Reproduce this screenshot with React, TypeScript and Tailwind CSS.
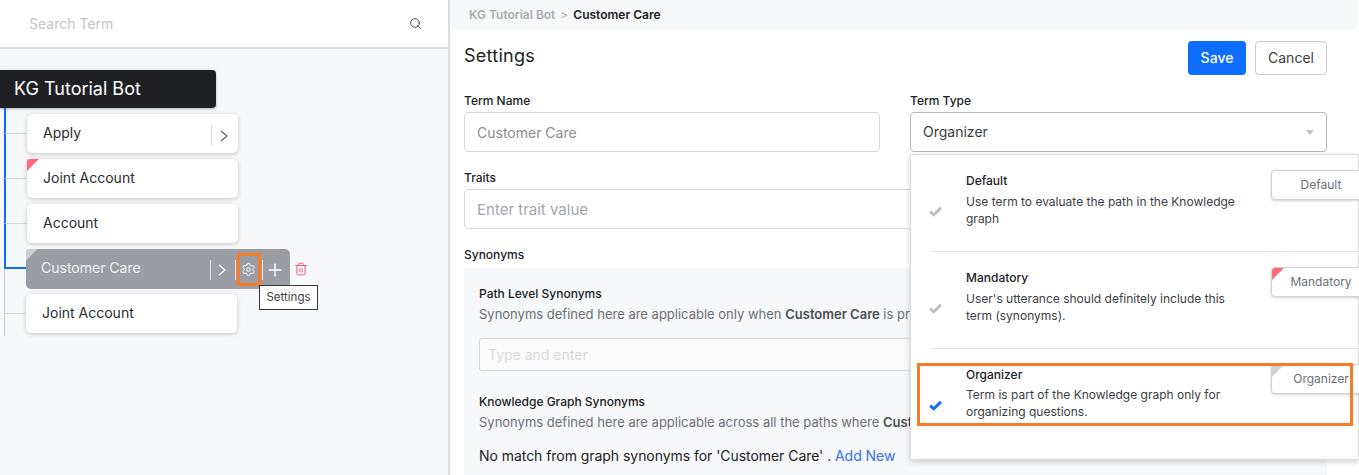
import { Plus, Search, Settings, Trash2 } from 'lucide-react';

const Corner = ({ color }: { color: 'red' | 'gray' }) => (
  <span
    className={`absolute left-0 top-0 h-3 w-3 rounded-tl-[3px] [clip-path:polygon(0_0,100%_0,0_100%)] ${
      color === 'red' ? 'bg-[#ff6b7d]' : 'bg-[#cfd1d5]'
    }`}
  />
);

const Check = ({ active }: { active?: boolean }) => (
  <svg viewBox="0 0 14 11" className={`h-[11px] w-[13px] ${active ? 'text-[#0d6efd]' : 'text-[#bdbfc4]'}`} fill="none" stroke="currentColor" strokeWidth={3.2}>
    <path d="M1.2 5.6l3.9 3.4L12.8 1.6" />
  </svg>
);

const Chevron = ({ className }: { className: string }) => (
  <svg viewBox="0 0 8 12" className={`h-3 w-2 ${className}`} fill="none" stroke="currentColor" strokeWidth={1.2}>
    <path d="M1 1l6 5-6 5" />
  </svg>
);

// connector: top half meets the stub, bottom half carries the trunk on
const Row = ({ blueTop, blueBottom, blueStub, children }: { blueTop?: boolean; blueBottom?: boolean; blueStub?: boolean; children: React.ReactNode }) => (
  <div className="relative flex h-[45px] items-center">
    <div className="ml-1 flex h-full w-[23px] shrink-0 flex-col">
      <div
        className={`h-[23px] ${blueTop ? 'border-l-2 border-l-[#0d6efd]' : 'border-l border-l-[#c9cbd0]'} ${
          blueStub ? 'border-b-2 border-b-[#0d6efd]' : 'border-b border-b-[#d3d5d9]'
        }`}
      />
      <div className={`flex-1 ${blueBottom ? 'border-l-2 border-l-[#0d6efd]' : 'border-l border-l-[#c9cbd0]'}`} />
    </div>
    {children}
  </div>
);

const Card = ({ label, corner, chevron, shift }: { label: string; corner?: boolean; chevron?: boolean; shift?: boolean }) => (
  <div className={`relative flex h-[39px] w-[211px] items-center rounded-[5px] bg-white pl-4 text-sm text-[#2a2c30] shadow-[0_1px_4px_rgba(0,0,0,0.22)] ${shift ? '-ml-px' : ''}`}>
    {corner && <Corner color="red" />}
    <span className="flex-1 -mt-px">{label}</span>
    {chevron && (
      <span className="mt-[3px] flex h-5 w-[27px] items-center justify-center border-l border-[#d5d7db] pr-[3px]">
        <Chevron className="mt-px text-[#5f6368]" />
      </span>
    )}
  </div>
);

const Option = ({ title, lines, badge, corner, active, height, tight }: { title: string; lines: string[]; badge: string; corner?: 'red' | 'gray'; active?: boolean; height: string; tight?: boolean }) => (
  <div className={`flex ${height}`}>
    <div className="w-[55px] shrink-0 pl-[18px] pt-[33px]">
      <Check active={active} />
    </div>
    <div className="w-[305px] shrink-0">
      <div className="text-xs font-medium leading-4 text-[#202124]">{title}</div>
      <div className={`${tight ? 'mt-[3px]' : 'mt-[4px]'} text-xs leading-[17px] text-[#3c4043]`}>
        {lines.map((l) => (
          <div key={l}>{l}</div>
        ))}
      </div>
    </div>
    <div className="relative -mt-[3px] flex h-[30px] w-[100px] shrink-0 items-center justify-center rounded-[4px] border border-[#d0d2d6] bg-white text-xs text-[#6b6f76] shadow-[0_1px_3px_rgba(0,0,0,0.18)]">
      {corner && <Corner color={corner} />}
      <span>{badge}</span>
    </div>
  </div>
);

export default function App() {
  return (
    <div className="flex h-[475px] w-[1359px] overflow-hidden bg-white [font-family:Inter,sans-serif]">
      {/* Left tree */}
      <aside className="flex w-[450px] shrink-0 flex-col border-r-2 border-[#dcdde0] bg-[#f7f8fa]">
        <div className="flex h-[49px] shrink-0 items-center justify-between border-b-2 border-[#dcdde0] bg-white pl-[29px] pr-[26px]">
          <span className="text-sm text-[#c3c5ca]">Search Term</span>
          <Search className="h-[13px] w-[13px] text-[#3c4043]" strokeWidth={1.6} />
        </div>
        <div className="mt-[21px] flex h-[38px] w-[216px] items-center rounded-r-[4px] bg-[#1f2024] pl-[14px] text-lg text-white shadow-[0_1px_3px_rgba(0,0,0,0.3)]">
          KG Tutorial Bot
        </div>
        <div className="ml-1 h-[3px] border-l-2 border-[#0d6efd]" />
        <Row blueTop blueBottom>
          <Card label="Apply" chevron />
        </Row>
        <Row blueTop blueBottom>
          <Card label="Joint Account" corner />
        </Row>
        <Row blueTop blueBottom>
          <Card label="Account" />
        </Row>
        <Row blueTop blueStub>
          <div className="relative -ml-px flex h-10 w-[264px] items-center rounded-[5px] bg-[#9a9ea4] pl-[15px] text-sm text-white">
            <Corner color="gray" />
            <span className="flex-1 -mt-px text-[#f1f2f3]">Customer Care</span>
            <span className="mt-[2px] flex h-5 w-[25px] items-center justify-center border-l border-[#e4e5e7] pr-[2px]">
              <Chevron className="text-white" />
            </span>
            <span className="mt-[2px] flex h-5 w-[27px] items-center justify-center border-l border-[#e4e5e7]">
              <span className="flex h-[33px] w-6 shrink-0 items-center justify-center border-[3px] border-[#f97b25]">
                <Settings className="h-[15px] w-[15px] -translate-x-px text-white" strokeWidth={1.5} />
              </span>
            </span>
            <span className="mt-[2px] flex h-5 w-[28px] items-center justify-center border-l border-[#e4e5e7] pr-1">
              <Plus className="h-5 w-5 text-white" strokeWidth={1.7} />
            </span>
          </div>
          <Trash2 className="ml-1 h-[14px] w-[14px] text-[#f2557a]" strokeWidth={1.7} />
          <div className="absolute left-[259px] top-[39px] flex h-[25px] w-[59px] items-center justify-center border border-[#35373b] bg-white pt-px text-[11.5px] text-[#3c4043]">
            Settings
          </div>
        </Row>
        <Row>
          <Card label="Joint Account" shift />
        </Row>
      </aside>

      {/* Right settings */}
      <main className="min-w-0 flex-1">
        <div className="flex h-[30px] w-[907px] items-center gap-[5px] bg-[#f7f8fa] pl-[19px] text-xs font-semibold">
          <span className="text-[#a8abb0]">KG Tutorial Bot</span>
          <span className="font-normal text-[#a8abb0]">&gt;</span>
          <span className="text-[#202124]">Customer Care</span>
        </div>
        <div className="w-[877px] pl-[14px]">
          <div className="mt-[11px] flex h-[34px] items-start justify-between">
            <h1 className="-mt-[2px] text-lg leading-[34px] tracking-[0.25px] text-[#202124]">Settings</h1>
            <div className="flex gap-[9px]">
              <button className="h-[34px] w-[58px] rounded-[4px] bg-[#0d6efd] text-sm font-medium text-white">Save</button>
              <button className="h-[34px] w-[72px] rounded-[4px] border border-[#c9cbd0] bg-white text-sm text-[#3c4043]">Cancel</button>
            </div>
          </div>

          <div className="mt-[18px] grid grid-cols-[416px_417px] gap-x-[30px]">
            <div>
              <div className="mb-[3px] text-xs font-medium leading-4 text-[#202124]">Term Name</div>
              <div className="flex h-10 items-center rounded-[4px] border border-[#d6d8db] pl-3 pt-[2px] text-sm text-[#8a8d92]">Customer Care</div>
            </div>
            <div className="relative">
              <div className="mb-[3px] text-xs font-medium leading-4 text-[#202124]">Term Type</div>
              <div className="flex h-10 items-center justify-between rounded-[4px] border border-[#b5b7bb] pl-3 pr-3 text-sm text-[#3c4043]">
                <span>Organizer</span>
                <span className="h-0 w-0 border-x-[4px] border-t-[5px] border-x-transparent border-t-[#c3c5ca]" />
              </div>
              {/* dropdown menu */}
              <div className="absolute left-0 top-[61px] z-10 h-[306px] w-[449px] border border-[#dcdde0] bg-white pt-[18px] shadow-[0_2px_6px_rgba(0,0,0,0.18)]">
                <Option title="Default" lines={['Use term to evaluate the path in the Knowledge', 'graph']} badge="Default" height="h-[78px]" />
                <div className="ml-5 border-t border-[#e3e4e7]" />
                <div className="pt-[18px]">
                  <Option title="Mandatory" lines={["User's utterance should definitely include this", 'term (synonyms).']} badge="Mandatory" corner="red" height="h-[78px]" />
                </div>
                <div className="ml-5 border-t border-[#e3e4e7]" />
                <div className="pt-[18px]">
                  <Option title="Organizer" lines={['Term is part of the Knowledge graph only for', 'organizing questions.']} badge="Organizer" corner="gray" active height="h-[60px]" tight />
                </div>
                <div className="absolute left-[6px] top-[208px] h-[63px] w-[436px] border-[3px] border-[#f97b25]" />
              </div>
            </div>
          </div>

          <div className="mb-[3px] mt-[18px] text-xs font-medium leading-4 text-[#202124]">Traits</div>
          <div className="flex h-10 items-center rounded-[4px] border border-[#d6d8db] pl-3 pt-[2px] text-[15px] text-[#a3a6ab]">Enter trait value</div>

          <div className="mb-[5px] mt-[18px] text-xs font-medium leading-4 text-[#202124]">Synonyms</div>
          <div className="h-[207px] overflow-hidden bg-[#f7f8fa] pl-[15px] pr-[15px] pt-[18px]">
            <div className="text-xs font-medium leading-4 text-[#202124]">Path Level Synonyms</div>
            <div className="mt-1 whitespace-nowrap text-[13px] leading-4 text-[#6b6f76]">
              Synonyms defined here are applicable only when <b className="font-semibold text-[#4a4d52]">Customer Care</b> is present in the path.
            </div>
            <div className="mt-4 flex h-[33px] items-center rounded-[3px] border border-[#d6d8db] bg-[#fbfbfc] pl-2 text-sm text-[#d8dadd]">Type and enter</div>
            <div className="mt-[23px] text-xs font-medium leading-4 text-[#202124]">Knowledge Graph Synonyms</div>
            <div className="mt-1 whitespace-nowrap text-[13px] leading-4 text-[#6b6f76]">
              Synonyms defined here are applicable across all the paths where <b className="font-semibold text-[#4a4d52]">Customer Care</b> is used.
            </div>
            <div className="mt-[18px] text-sm leading-4 tracking-[-0.05px] text-[#202124]">
              No match from graph synonyms for 'Customer Care' . <span className="text-[#2f6fed]">Add New</span>
            </div>
          </div>
        </div>
      </main>
    </div>
  );
}
